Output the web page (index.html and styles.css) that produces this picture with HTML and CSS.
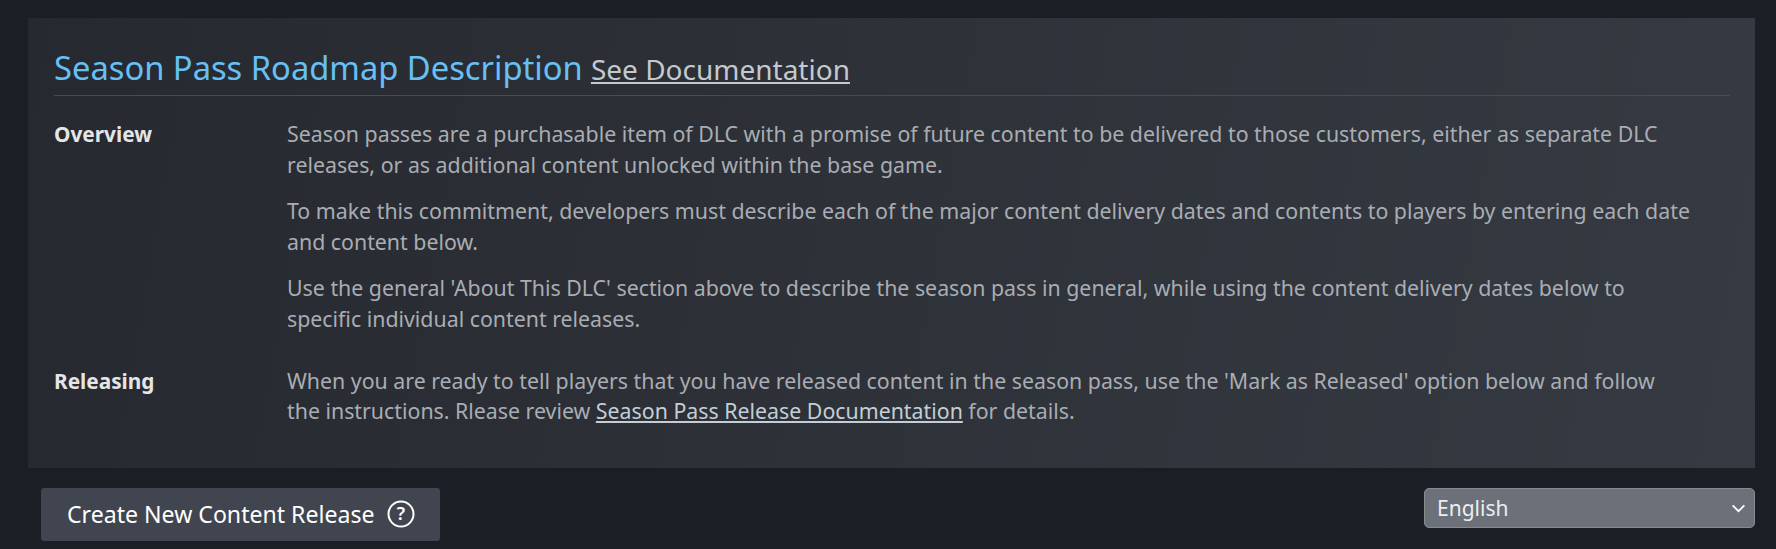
FILE: index.html
```html
<!DOCTYPE html>
<html lang="en">
<head>
    <meta charset="UTF-8">
    <title>Season Pass Roadmap Description</title>
    <link rel="stylesheet" href="styles.css">
</head>
<body>
    <div class="panel">
        <div class="panel-title">
            <span class="panel-heading">Season Pass Roadmap Description</span>
            <a href="#" class="panel-link">See Documentation</a>
        </div>
        <div class="info-row">
            <div class="info-label">Overview</div>
            <div class="info-text">
                <p>Season passes are a purchasable item of DLC with a promise of future content to be delivered to those customers, either as separate DLC releases, or as additional content unlocked within the base game.</p>
                <p>To make this commitment, developers must describe each of the major content delivery dates and contents to players by entering each date and content below.</p>
                <p>Use the general 'About This DLC' section above to describe the season pass in general, while using the content delivery dates below to specific individual content releases.</p>
            </div>
        </div>
        <div class="info-row">
            <div class="info-label">Releasing</div>
            <div class="info-text">
                <p>When you are ready to tell players that you have released content in the season pass, use the 'Mark as Released' option below and follow the instructions. Rlease review <a href="#">Season Pass Release Documentation</a> for details.</p>
            </div>
        </div>
    </div>

    <div class="actions">
        <button class="create-button">
            Create New Content Release
            <svg class="help-icon" viewBox="0 0 28 28" width="28" height="28">
                <circle cx="14" cy="14" r="12.5" fill="none" stroke="#fff" stroke-width="2"/>
                <text x="14" y="20" text-anchor="middle" class="help-mark">?</text>
            </svg>
        </button>
        <div class="lang-select">
            <span>English</span>
            <svg viewBox="0 0 16 10" width="15" height="9">
                <path d="M1.5 1.5 L8 8 L14.5 1.5" fill="none" stroke="#fff" stroke-width="2"/>
            </svg>
        </div>
    </div>
</body>
</html>
```

FILE: styles.css
```css
* {
    margin: 0;
    padding: 0;
    box-sizing: border-box;
    font-family: "Noto Sans", sans-serif;
}

body {
    background: #1b1e24;
    padding: 18px 21px 0 28px;
    height: 549px;
    overflow: hidden;
}

.panel {
    height: 450px;
    padding: 30px 25px 0 26px;
    background: linear-gradient(100deg, #26292f, #363a42);
}

.panel-title {
    height: 48px;
    border-bottom: 1px solid #484b52;
    white-space: nowrap;
}

.panel-heading {
    font-size: 32.7px;
    line-height: 40px;
    color: #66c0f4;
}

.panel-link {
    margin-left: 4px;
    font-size: 28px;
    color: #c3c9ce;
}

.info-row {
    display: flex;
    color: #a9adb3;
    font-size: 21.33px;
    line-height: 30.6px;
}

.info-row:nth-child(2) {
    margin-top: 23px;
}

.info-row:nth-child(3) {
    margin-top: 15px;
}

.info-label {
    width: 233px;
    flex-shrink: 0;
    font-size: 20.8px;
    font-weight: 700;
    color: #e5e5e5;
}

.info-text {
    width: 1405px;
}

.info-text p {
    margin-bottom: 16px;
}

.info-text a {
    color: #c3ced6;
}

.actions {
    display: flex;
    justify-content: space-between;
    align-items: flex-start;
    margin-top: 20px;
    padding-left: 13px;
}

.create-button {
    display: flex;
    align-items: center;
    gap: 12px;
    height: 53px;
    padding: 0 25px 2px 26px;
    border: none;
    border-radius: 3px;
    background: #41454f;
    color: #fff;
    font-size: 23.1px;
}

.help-mark {
    font-size: 18px;
    font-weight: 600;
    fill: #fff;
}

.lang-select {
    display: flex;
    justify-content: space-between;
    align-items: center;
    width: 331px;
    height: 40px;
    padding: 0 8px 0 12px;
    border: 1px solid #868b93;
    border-radius: 5px;
    background: #6b7079;
    color: #eceef1;
    font-size: 21px;
}
```
